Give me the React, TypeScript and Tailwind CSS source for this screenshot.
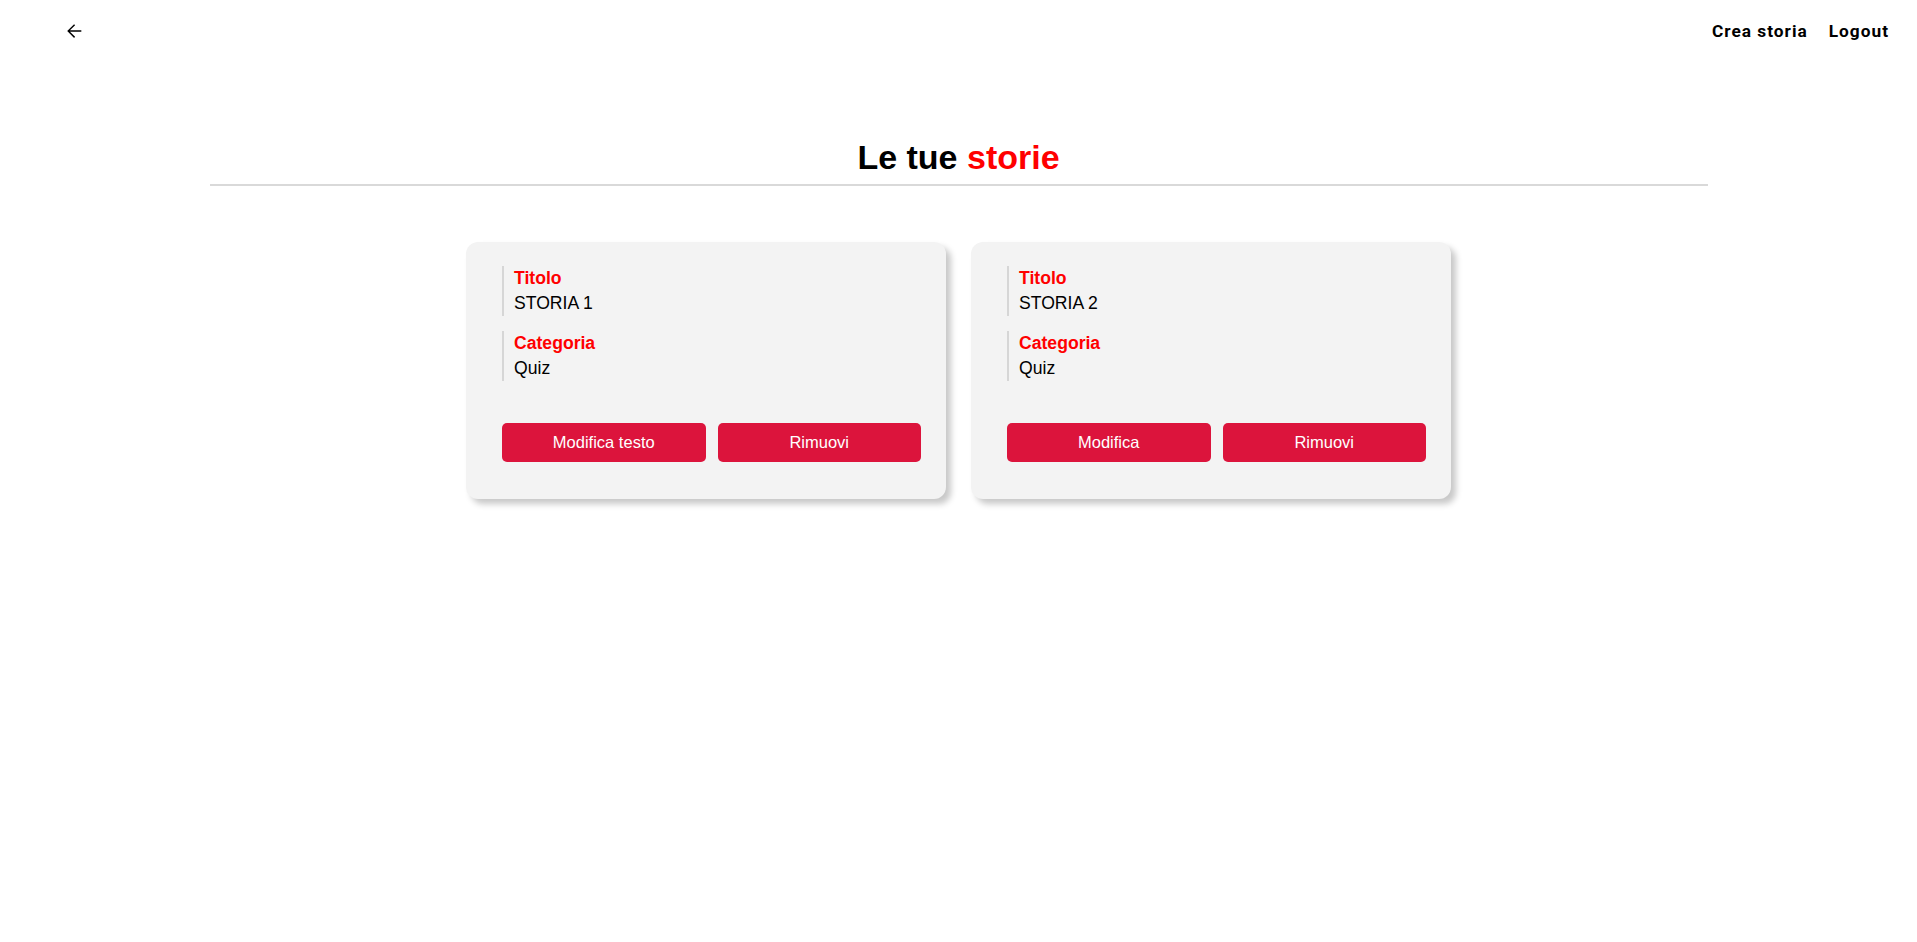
import React from "react";

const stories = [
  { title: "STORIA 1", category: "Quiz", edit: "Modifica testo" },
  { title: "STORIA 2", category: "Quiz", edit: "Modifica" },
];

function Field({ label, value }: { label: string; value: string }) {
  return (
    <div className="border-l-2 border-[#d6d6d6] pl-[10px] text-[17.6px] leading-[25px]">
      <div className="font-bold text-[#ff0000]">{label}</div>
      <div className="text-black">{value}</div>
    </div>
  );
}

function Card({ s }: { s: (typeof stories)[number] }) {
  return (
    <div className="w-[480px] rounded-xl bg-[#f3f3f3] pl-[36px] pr-[25px] pt-[24px] pb-[37px] shadow-[5px_5px_6px_rgba(0,0,0,0.22)]">
      <div className="flex flex-col gap-[15px]">
        <Field label="Titolo" value={s.title} />
        <Field label="Categoria" value={s.category} />
      </div>
      <div className="mt-[42px] flex gap-[12px]">
        <button className="h-[39px] flex-1 rounded-[5px] bg-[#dc143c] text-[16.5px] text-white">
          {s.edit}
        </button>
        <button className="h-[39px] flex-1 rounded-[5px] bg-[#dc143c] text-[16.5px] text-white">
          Rimuovi
        </button>
      </div>
    </div>
  );
}

export default function App() {
  return (
    <div className="min-h-[942px] w-full bg-white font-['Liberation_Sans',Arial,sans-serif]">
      <header className="flex h-[62px] items-center justify-between pl-[63px] pr-[28px]">
        <button className="flex h-[22px] w-[22px] items-center justify-center text-black">
          <svg viewBox="0 0 24 24" width="22" height="22" fill="currentColor">
            <path d="M20 11.2H7.6l5.6-5.6L12.1 4.5 4.6 12l7.5 7.5 1.1-1.1-5.6-5.6H20z" />
          </svg>
        </button>
        <nav className="mt-[2px] flex items-center gap-[21px] font-['Roboto',sans-serif] text-[17.3px] font-bold tracking-[1px] text-black">
          <a>Crea storia</a>
          <a>Logout</a>
        </nav>
      </header>
      <div className="mx-auto mt-[76px] w-[1498px] border-b-2 border-[#d9d9d9] pb-[8px] text-center">
        <h1 className="text-[34px] font-bold leading-[38px]">
          <span className="text-black">Le tue </span>
          <span className="text-[#ff0000]">storie</span>
        </h1>
      </div>
      <div className="mt-[56px] flex justify-center gap-[25px]">
        {stories.map((s) => (
          <Card key={s.title} s={s} />
        ))}
      </div>
    </div>
  );
}
